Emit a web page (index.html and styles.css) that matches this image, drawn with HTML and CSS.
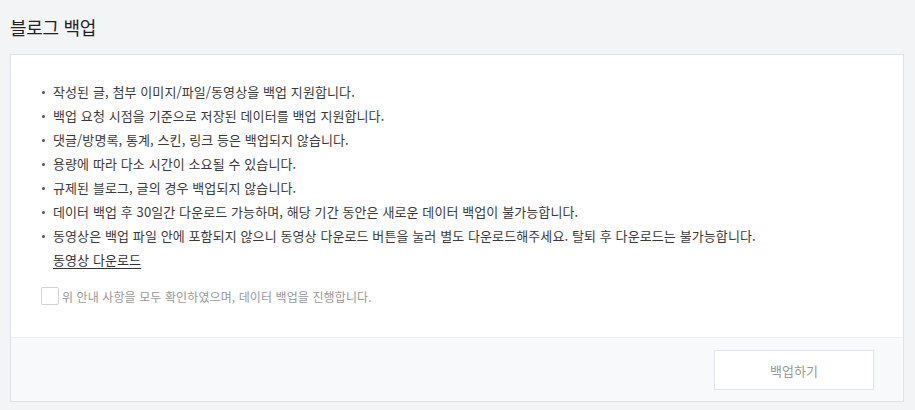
FILE: index.html
```html
<!DOCTYPE html>
<html lang="ko">
<head>
<meta charset="utf-8">
<link rel="stylesheet" href="styles.css">
</head>
<body>
<div class="page">
  <h1 class="title">블로그 백업</h1>
  <div class="card">
    <div class="card-body">
      <ul class="notes">
        <li>작성된 글, 첨부 이미지/파일/동영상을 백업 지원합니다.</li>
        <li>백업 요청 시점을 기준으로 저장된 데이터를 백업 지원합니다.</li>
        <li>댓글/방명록, 통계, 스킨, 링크 등은 백업되지 않습니다.</li>
        <li>용량에 따라 다소 시간이 소요될 수 있습니다.</li>
        <li>규제된 블로그, 글의 경우 백업되지 않습니다.</li>
        <li>데이터 백업 후 30일간 다운로드 가능하며, 해당 기간 동안은 새로운 데이터 백업이 불가능합니다.</li>
        <li>동영상은 백업 파일 안에 포함되지 않으니 동영상 다운로드 버튼을 눌러 별도 다운로드해주세요. 탈퇴 후 다운로드는 불가능합니다.<br><a class="link" href="#">동영상 다운로드</a></li>
      </ul>
      <label class="agree">
        <span class="box"></span>
        <span class="agree-text">위 안내 사항을 모두 확인하였으며, 데이터 백업을 진행합니다.</span>
      </label>
    </div>
    <div class="card-foot">
      <button class="btn" type="button">백업하기</button>
    </div>
  </div>
</div>
</body>
</html>
```
FILE: styles.css
```css
* { box-sizing: border-box; }
html, body { margin: 0; padding: 0; }
body {
  background: #f3f4f6;
  font-family: "Noto Sans CJK KR", "Noto Sans", sans-serif;
  color: #333;
  width: 915px;
  height: 410px;
  overflow: hidden;
}
.page {
  padding: 15px 11px 0 10px;
}
.title {
  margin: 0 0 14px 0;
  font-size: 18px;
  font-weight: 400;
  line-height: 25px;
  color: #222;
  letter-spacing: -0.3px;
}
.card {
  background: #fff;
  border: 1px solid #dfe2e8;
  height: 348px;
  display: flex;
  flex-direction: column;
}
.card-body {
  padding: 25px 30px 0 30px;
  height: 282px;
}
.notes {
  list-style: none;
  margin: 0;
  padding: 0;
}
.notes li {
  position: relative;
  padding-left: 12px;
  font-size: 13px;
  line-height: 24px;
  letter-spacing: 0.1px;
  color: #3a3a3a;
}
.notes li::before {
  content: "";
  position: absolute;
  left: 1px;
  top: 11px;
  width: 3px;
  height: 3px;
  border-radius: 50%;
  background: #555;
}
.link {
  color: #333;
  text-decoration: underline;
  text-underline-offset: 3px;
}
.agree {
  display: flex;
  align-items: center;
  gap: 3px;
  margin-top: 15px;
}
.box {
  width: 18px;
  height: 18px;
  border: 1px solid #cfd3da;
  border-radius: 2px;
  background: #fff;
}
.agree-text {
  font-size: 12px;
  color: #999;
  letter-spacing: 0.1px;
}
.card-foot {
  flex: 1;
  background: #f8f9fb;
  border-top: 1px solid #eceef2;
  display: flex;
  justify-content: flex-end;
  align-items: flex-start;
  padding: 12px 29px 0 0;
}
.btn {
  width: 160px;
  height: 40px;
  background: #fff;
  border: 1px solid #e1e4ea;
  border-radius: 0;
  font-family: inherit;
  font-size: 13px;
  color: #999;
  letter-spacing: 0;
}
```
